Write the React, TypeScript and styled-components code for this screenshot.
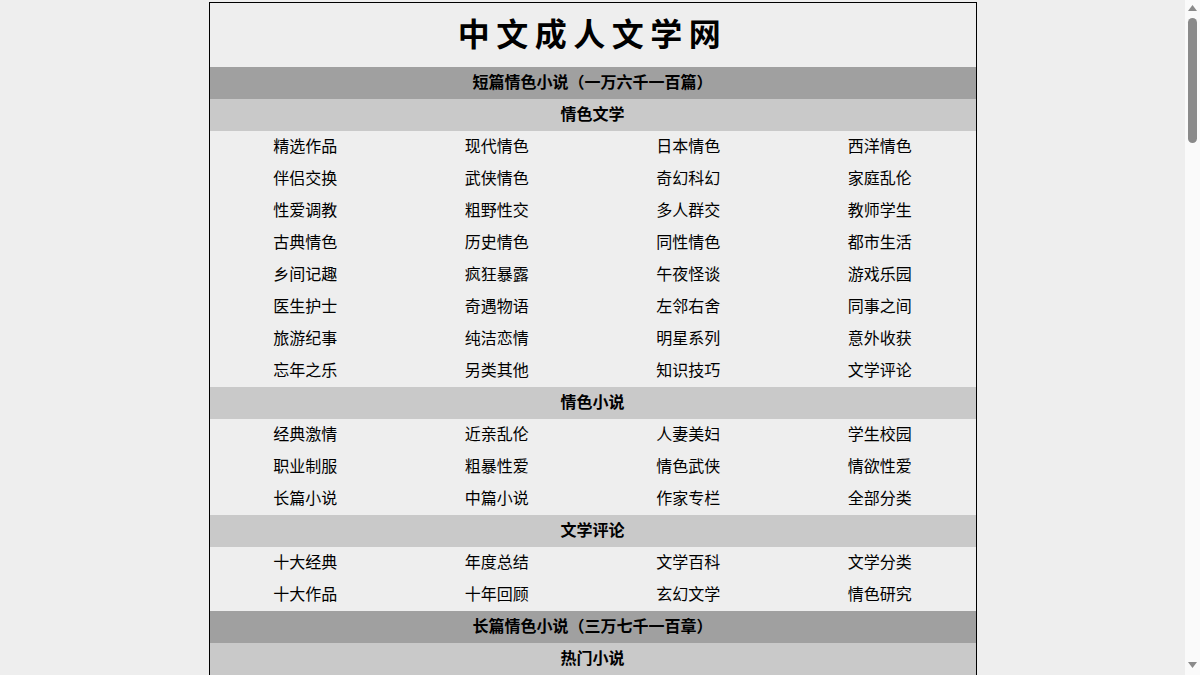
import React from 'react';
import styled, { createGlobalStyle } from 'styled-components';

// --- Global ---

const GlobalStyle = createGlobalStyle`
  html {
    scrollbar-width: none;
  }
  html::-webkit-scrollbar {
    display: none;
  }
  html, body {
    margin: 0;
    padding: 0;
    background-color: #eeeeee;
    font-family: "Noto Sans CJK SC", "Liberation Sans", sans-serif;
    color: #000;
  }
`;

// --- Styled Components ---

const Viewport = styled.div`
  margin-right: 15px;
  padding-top: 2px;
`;

const Page = styled.div`
  width: 768px;
  margin: 0 auto;
  box-sizing: border-box;
  border: 1px solid #000;
  background-color: #eeeeee;
`;

const SiteTitle = styled.h1`
  margin: 0;
  height: 64px;
  padding: 0 0 6px 0;
  box-sizing: border-box;
  display: flex;
  align-items: center;
  justify-content: center;
  font-size: 32px;
  font-weight: 700;
  letter-spacing: 6.5px;
`;

const SectionHeader = styled.div<{ $level: 1 | 2 }>`
  height: 32px;
  padding-bottom: 4px;
  box-sizing: border-box;
  display: flex;
  align-items: center;
  justify-content: center;
  font-size: 16px;
  font-weight: 700;
  background-color: ${(p) => (p.$level === 1 ? '#a0a0a0' : '#c9c9c9')};
`;

const LinkGrid = styled.div`
  display: grid;
  grid-template-columns: repeat(4, 1fr);
  grid-auto-rows: 32px;
`;

const LinkItem = styled.a`
  display: flex;
  align-items: center;
  justify-content: center;
  padding-bottom: 4px;
  box-sizing: border-box;
  font-size: 16px;
  color: #000;
  text-decoration: none;
  cursor: pointer;
`;

// fake browser scrollbar, fixed over the right edge
const ScrollTrack = styled.div`
  position: fixed;
  top: 0;
  right: 0;
  width: 15px;
  height: 100vh;
  background-color: #fafafa;
`;

const ScrollThumb = styled.div`
  position: absolute;
  top: 18px;
  left: 3px;
  width: 9px;
  height: 125px;
  border-radius: 5px;
  background-color: #8a8a8a;
`;

const ScrollArrow = styled.svg<{ $down?: boolean }>`
  position: absolute;
  left: 3px;
  width: 9px;
  height: 6px;
  ${(p) => (p.$down ? 'bottom: 7px;' : 'top: 5px;')}
`;

// --- Data ---

interface Group {
  title: string;
  links: string[];
}

interface Block {
  title: string;
  groups: Group[];
}

const blocks: Block[] = [
  {
    title: '短篇情色小说（一万六千一百篇）',
    groups: [
      {
        title: '情色文学',
        links: [
          '精选作品', '现代情色', '日本情色', '西洋情色',
          '伴侣交换', '武侠情色', '奇幻科幻', '家庭乱伦',
          '性爱调教', '粗野性交', '多人群交', '教师学生',
          '古典情色', '历史情色', '同性情色', '都市生活',
          '乡间记趣', '疯狂暴露', '午夜怪谈', '游戏乐园',
          '医生护士', '奇遇物语', '左邻右舍', '同事之间',
          '旅游纪事', '纯洁恋情', '明星系列', '意外收获',
          '忘年之乐', '另类其他', '知识技巧', '文学评论',
        ],
      },
      {
        title: '情色小说',
        links: [
          '经典激情', '近亲乱伦', '人妻美妇', '学生校园',
          '职业制服', '粗暴性爱', '情色武侠', '情欲性爱',
          '长篇小说', '中篇小说', '作家专栏', '全部分类',
        ],
      },
      {
        title: '文学评论',
        links: [
          '十大经典', '年度总结', '文学百科', '文学分类',
          '十大作品', '十年回顾', '玄幻文学', '情色研究',
        ],
      },
    ],
  },
  {
    title: '长篇情色小说（三万七千一百章）',
    groups: [
      {
        title: '热门小说',
        links: Array.from({ length: 48 }, (_, i) => `第${i + 1}部`),
      },
      {
        title: '最新更新',
        links: Array.from({ length: 48 }, (_, i) => `第${i + 1}章`),
      },
    ],
  },
];

// --- Component ---

export default function App() {
  return (
    <>
      <GlobalStyle />
      <Viewport>
        <Page>
          <SiteTitle>中文成人文学网</SiteTitle>
          {blocks.map((block) => (
            <section key={block.title}>
              <SectionHeader $level={1}>{block.title}</SectionHeader>
              {block.groups.map((group) => (
                <div key={group.title}>
                  <SectionHeader $level={2}>{group.title}</SectionHeader>
                  <LinkGrid>
                    {group.links.map((link) => (
                      <LinkItem key={link}>{link}</LinkItem>
                    ))}
                  </LinkGrid>
                </div>
              ))}
            </section>
          ))}
        </Page>
      </Viewport>
      <ScrollTrack>
        <ScrollArrow viewBox="0 0 9 6">
          <polygon points="4.5,0 9,6 0,6" fill="#8a8a8a" />
        </ScrollArrow>
        <ScrollThumb />
        <ScrollArrow $down viewBox="0 0 9 6">
          <polygon points="0,0 9,0 4.5,6" fill="#8a8a8a" />
        </ScrollArrow>
      </ScrollTrack>
    </>
  );
}
